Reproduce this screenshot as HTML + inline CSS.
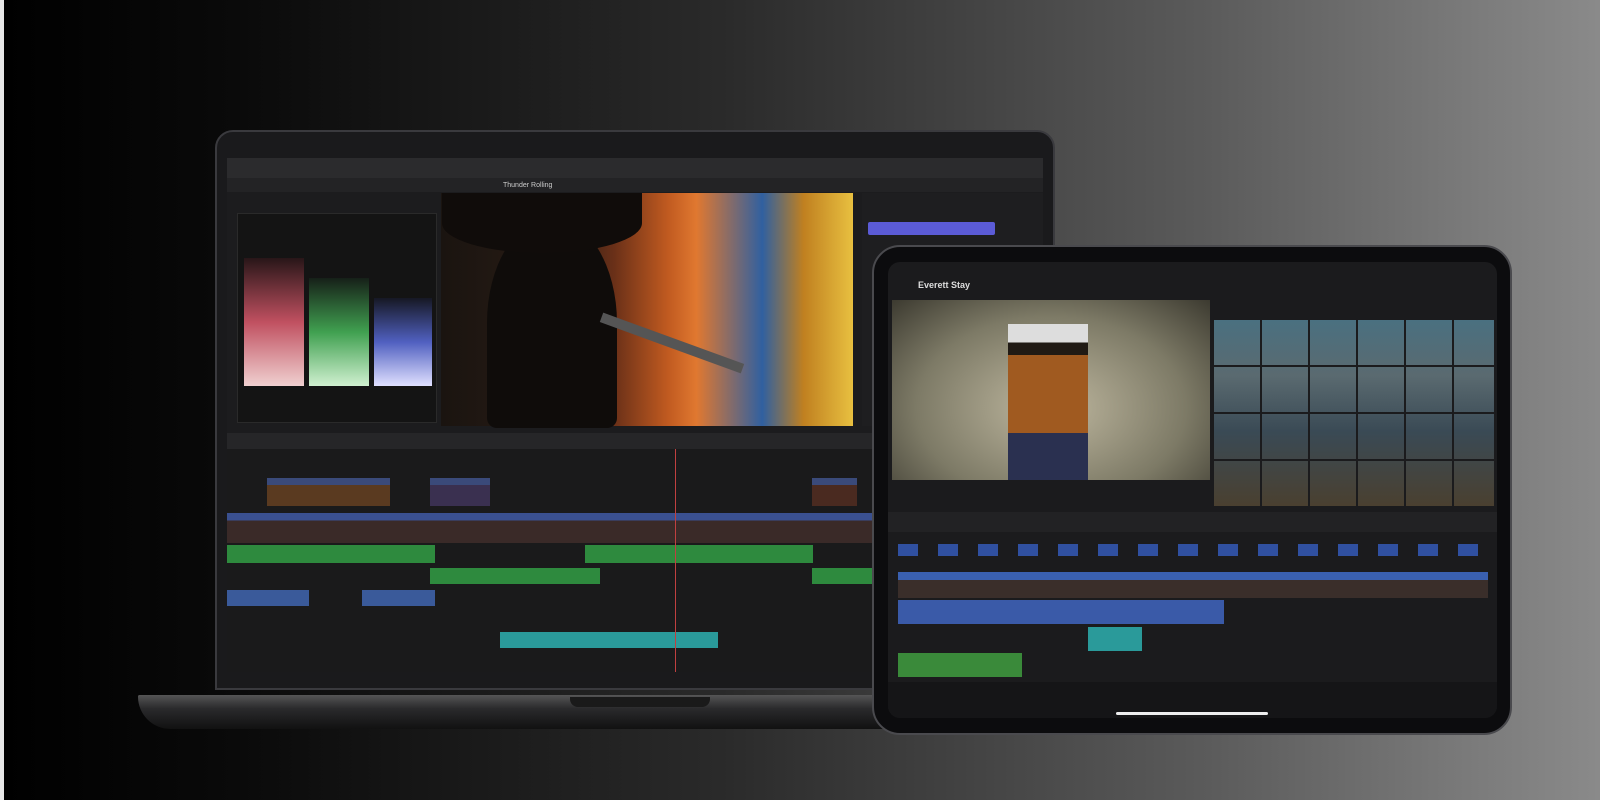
<!DOCTYPE html>
<html><head><meta charset="utf-8"><style>
*{margin:0;padding:0;box-sizing:border-box}
body{width:1600px;height:800px;overflow:hidden;position:relative;font-family:"Liberation Sans",sans-serif;
background:linear-gradient(90deg,#000 0%,#0a0a0a 15%,#2a2a2a 45%,#5a5a5a 75%,#8a8a8a 100%)}
.a{position:absolute}
</style></head><body>
<div class="a" style="left:0;top:0;width:4px;height:800px;background:#e8e8e8"></div>
<!-- laptop -->
<div class="a" style="left:215px;top:130px;width:840px;height:560px;background:#1a1a1c;border-radius:18px 18px 0 0;border:2px solid #3a3a3e"></div>
<div class="a" style="left:138px;top:695px;width:920px;height:34px;background:linear-gradient(#555 0%,#2a2a2c 40%,#111 100%);border-radius:2px 2px 40px 40px"></div>
<div class="a" style="left:570px;top:697px;width:140px;height:10px;background:#1a1a1a;border-radius:0 0 8px 8px"></div>
<div class="a" style="left:227px;top:158px;width:816px;height:514px;background:#1c1c1e">
 <div class="a" style="left:0;top:0;width:816px;height:20px;background:#2b2b2d"></div>
 <div class="a" style="left:0;top:20px;width:816px;height:14px;background:#232325"></div>
 <div class="a" style="left:276px;top:24px;color:#ccc;font-size:7px">Thunder Rolling</div>
 <!-- scopes -->
 <div class="a" style="left:10px;top:55px;width:200px;height:210px;background:#141414;border:1px solid #2a2a2a"></div>
 <div class="a" style="left:17px;top:100px;width:60px;height:128px;background:linear-gradient(0deg,#f0d0d0,#c05060 50%,rgba(120,30,40,.2))"></div>
 <div class="a" style="left:82px;top:120px;width:60px;height:108px;background:linear-gradient(0deg,#d0f0d0,#40a050 50%,rgba(30,80,40,.2))"></div>
 <div class="a" style="left:147px;top:140px;width:58px;height:88px;background:linear-gradient(0deg,#e0e0ff,#5060c0 50%,rgba(30,40,100,.2))"></div>
 <!-- video -->
 <div class="a" style="left:214px;top:35px;width:412px;height:233px;background:linear-gradient(90deg,#1a1410 0%,#2a1d15 30%,#6a3018 42%,#c05a20 55%,#e07830 62%,#3060a0 78%,#c08020 88%,#e8c040 100%)"></div>
 <div class="a" style="left:260px;top:60px;width:130px;height:210px;background:#0f0c0a;border-radius:50% 50% 10px 10px"></div>
 <div class="a" style="left:215px;top:35px;width:200px;height:60px;background:#100c0a;border-radius:0 0 50% 50%"></div>
 <div class="a" style="left:370px;top:180px;width:150px;height:10px;background:#555;transform:rotate(20deg)"></div>
 <!-- inspector -->
 <div class="a" style="left:635px;top:35px;width:181px;height:233px;background:#1e1e20"></div>
 <div class="a" style="left:641px;top:64px;width:127px;height:13px;background:#5b5bd6;border-radius:2px"></div>
 <!-- timeline -->
 <div class="a" style="left:0;top:275px;width:816px;height:16px;background:#262628"></div>
 <div class="a" style="left:0;top:291px;width:816px;height:223px;background:#1a1a1b"></div>
 <div class="a" style="left:40px;top:320px;width:123px;height:28px;background:linear-gradient(#3a4a7a 25%,#5a3a20 25%)"></div>
 <div class="a" style="left:203px;top:320px;width:60px;height:28px;background:linear-gradient(#3a4a7a 25%,#3a3050 25%)"></div>
 <div class="a" style="left:585px;top:320px;width:45px;height:28px;background:linear-gradient(#3a4a7a 25%,#4a2a20 25%)"></div>
 <div class="a" style="left:0;top:355px;width:816px;height:30px;background:linear-gradient(#3a5090 25%,#3a2a28 25%)"></div>
 <div class="a" style="left:0;top:387px;width:208px;height:18px;background:#2e8a3e"></div>
 <div class="a" style="left:358px;top:387px;width:228px;height:18px;background:#2e8a3e"></div>
 <div class="a" style="left:203px;top:410px;width:170px;height:16px;background:#2e8a3e"></div>
 <div class="a" style="left:585px;top:410px;width:60px;height:16px;background:#2e8a3e"></div>
 <div class="a" style="left:0;top:432px;width:82px;height:16px;background:#3a5a9a"></div>
 <div class="a" style="left:135px;top:432px;width:73px;height:16px;background:#3a5a9a"></div>
 <div class="a" style="left:273px;top:474px;width:218px;height:16px;background:#2a9a9a"></div>
 <div class="a" style="left:448px;top:291px;width:1px;height:223px;background:#c04040"></div>
</div>
<!-- iPad -->
<div class="a" style="left:872px;top:245px;width:640px;height:490px;background:#0c0c0e;border-radius:28px;border:2px solid #4a4a4e"></div>
<div class="a" style="left:888px;top:262px;width:609px;height:456px;background:#1b1b1d;border-radius:12px;overflow:hidden">
 <div class="a" style="left:30px;top:18px;color:#ddd;font-size:9px;font-weight:bold">Everett Stay</div>
 <div class="a" style="left:4px;top:38px;width:318px;height:180px;background:radial-gradient(ellipse at 50% 60%,#bfb8a0,#7d7a66 60%,#3c3a30)"></div>
 <div class="a" style="left:120px;top:62px;width:80px;height:156px;background:linear-gradient(#ddd 0 12%,#201a14 12% 20%,#a05a20 20% 70%,#2a3050 70%)"></div>
 <div class="a" style="left:326px;top:58px;width:280px;height:186px;background:repeating-linear-gradient(90deg,transparent 0 46px,#1b1b1d 46px 48px),repeating-linear-gradient(0deg,transparent 0 45px,#1b1b1d 45px 47px),linear-gradient(#4a7080,#5a6a70 30%,#3a4a55 60%,#4a4030)"></div>
 <div class="a" style="left:0;top:250px;width:609px;height:20px;background:#222224"></div>
 <div class="a" style="left:10px;top:282px;width:590px;height:12px;background:repeating-linear-gradient(90deg,#3050a0 0 20px,#1b1b1d 20px 40px)"></div>
 <div class="a" style="left:10px;top:310px;width:590px;height:26px;background:linear-gradient(#3a60b0 30%,#3a2e2a 30%)"></div>
 <div class="a" style="left:10px;top:338px;width:326px;height:24px;background:#3a5aa8"></div>
 <div class="a" style="left:200px;top:365px;width:54px;height:24px;background:#2a9a9a"></div>
 <div class="a" style="left:10px;top:391px;width:124px;height:24px;background:#3a8a3a"></div>
 <div class="a" style="left:0;top:420px;width:609px;height:36px;background:#151517"></div>
 <div class="a" style="left:228px;top:450px;width:152px;height:3px;background:#eee;border-radius:2px"></div>
</div>
</body></html>
